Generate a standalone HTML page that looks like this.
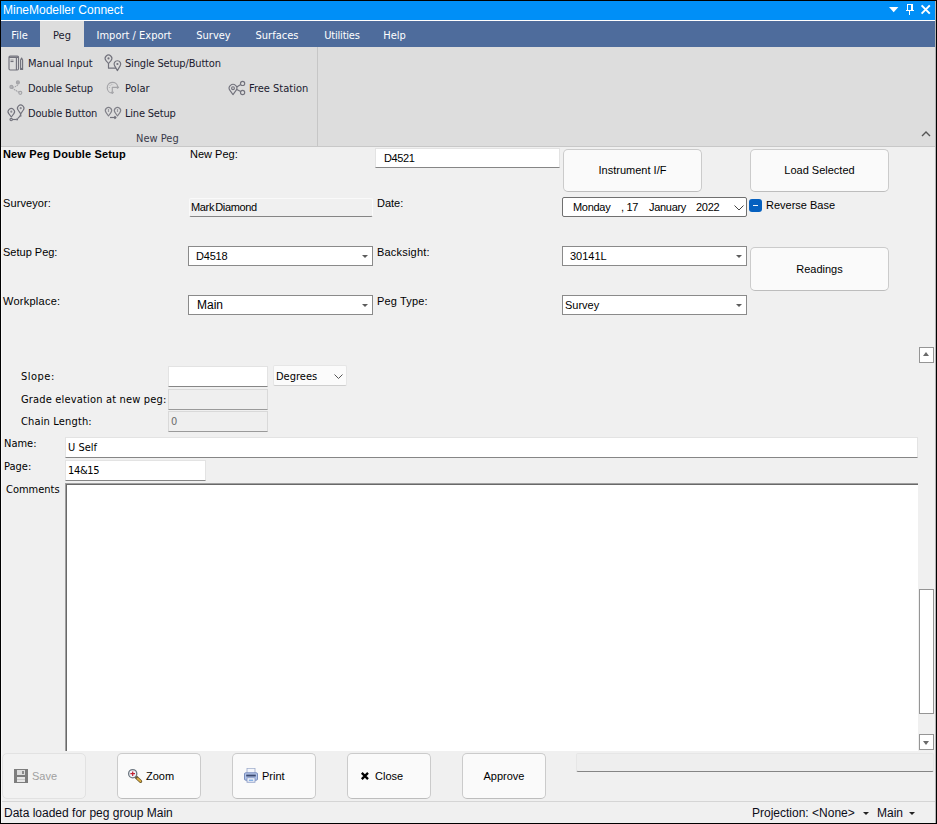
<!DOCTYPE html>
<html><head><meta charset="utf-8"><title>MineModeller Connect</title>
<style>
html,body{margin:0;padding:0;}
body{width:937px;height:824px;position:relative;overflow:hidden;background:#f0f0f0;font-family:"Liberation Sans",sans-serif;font-size:11px;color:#000;}
.a{position:absolute;box-sizing:border-box;white-space:nowrap;}
.th{font-family:"DejaVu Sans Condensed","DejaVu Sans",sans-serif;font-size:11px;}
.ms{font-family:"Liberation Sans",sans-serif;font-size:11px;}
.t{line-height:14px;height:14px;}
#frame{left:0;top:0;width:937px;height:824px;border:1px solid #000;z-index:50;pointer-events:none;}
#title{left:1px;top:1px;width:934px;height:19px;background:#008ff7;color:#fff;font-size:12px;}
#tabs{left:1px;top:21px;width:934px;height:26px;background:#4e6c9c;}
.tab{top:0;height:26px;line-height:30px;color:#fff;text-align:center;}
#ribbon{left:1px;top:47px;width:934px;height:99px;background:#dddddd;}
.ri{color:#1b1b2f;}
.inp{background:#fff;border:1px solid #e3e3e3;border-bottom:1px solid #868686;}
.dis{background:#efefef;border:1px solid #d9d9d9;border-bottom:1px solid #9a9a9a;}
.cb{background:#fff;border:1px solid #8a8a8a;}
.btn{background:#fafafa;border:1px solid #cbcbcb;border-bottom-color:#bdbdbd;border-radius:5px;text-align:center;}
.arr{width:0;height:0;border-left:3px solid transparent;border-right:3px solid transparent;border-top:3px solid #5c5c5c;}
</style></head><body>
<div class="a" id="title"><span class="a" style="left:2px;top:1px;line-height:16px">MineModeller Connect</span>
<svg class="a" style="left:884px;top:0" width="50" height="19" viewBox="885 1 50 19"><path d="M889 7H898.4L893.7 12.2Z" fill="#fff"/><g fill="#fff" shape-rendering="crispEdges"><rect x="907" y="4" width="1" height="7"/><rect x="907" y="4" width="6" height="1"/><rect x="911" y="4" width="2" height="7"/><rect x="906" y="10" width="8" height="1"/><rect x="909" y="11" width="1" height="4"/></g><path d="M921.6 5.4L929.8 13.6M929.8 5.4L921.6 13.6" stroke="#fff" stroke-width="2" fill="none"/></svg></div>
<div class="a" style="left:1px;top:20px;width:934px;height:1px;background:#fff"></div>
<div class="a" id="tabs">
 <div class="a tab th" style="left:0;width:37px">File</div>
 <div class="a tab th" style="left:39px;width:44px;background:#dddddd;color:#1b1b2f">Peg</div>
 <div class="a tab th" style="left:83px;width:100px">Import / Export</div>
 <div class="a tab th" style="left:183px;width:59px">Survey</div>
 <div class="a tab th" style="left:242px;width:68px">Surfaces</div>
 <div class="a tab th" style="left:311px;width:60px;letter-spacing:-0.2px">Utilities</div>
 <div class="a tab th" style="left:370px;width:47px">Help</div>
</div>
<div class="a" id="ribbon">
 <div class="a" style="left:316px;top:0;width:1px;height:99px;background:#c6c6c6"></div>
 <div class="a th ri t" style="left:27px;top:10px">Manual Input</div>
 <div class="a th ri t" style="left:27px;top:35px;letter-spacing:-0.18px">Double Setup</div>
 <div class="a th ri t" style="left:27px;top:60px;letter-spacing:-0.17px">Double Button</div>
 <div class="a th ri t" style="left:124px;top:10px;letter-spacing:-0.16px">Single Setup/Button</div>
 <div class="a th ri t" style="left:124px;top:35px">Polar</div>
 <div class="a th ri t" style="left:124px;top:60px;letter-spacing:-0.2px">Line Setup</div>
 <div class="a th ri t" style="left:248px;top:35px">Free Station</div>
 <div class="a th ri t" style="left:135px;top:85px;color:#3a3a4a">New Peg</div>
 <svg class="a" style="left:920px;top:84px" width="10" height="6" viewBox="0 0 10 6"><path d="M1 5 L5 1 L9 5" fill="none" stroke="#555" stroke-width="1.4"/></svg>
</div>
<div class="a" style="left:1px;top:146px;width:934px;height:1px;background:#c8c8c8"></div>

<div class="a ms t" style="left:3px;top:147px;font-weight:bold;letter-spacing:0.15px">New Peg Double Setup</div>
<div class="a ms t" style="left:190px;top:147px">New Peg:</div>
<div class="a inp ms" style="left:375px;top:148px;width:185px;height:20px;line-height:18px;padding-left:8px;letter-spacing:-0.4px">D4521</div>
<div class="a btn ms" style="left:563px;top:149px;width:139px;height:43px;line-height:41px">Instrument I/F</div>
<div class="a btn ms" style="left:750px;top:149px;width:139px;height:43px;line-height:41px">Load Selected</div>

<div class="a ms t" style="left:3px;top:196px;letter-spacing:0.1px">Surveyor:</div>
<div class="a ms" style="left:189px;top:198px;width:184px;height:19px;line-height:17px;padding-left:1px;letter-spacing:-0.35px;word-spacing:-1.5px;background:#f0f0f0;border:1px solid #fafafa;border-bottom:1px solid #858585;border-radius:2px">Mark Diamond</div>
<div class="a ms t" style="left:377px;top:196px">Date:</div>
<div class="a ms" style="left:562px;top:197px;width:185px;height:20px;line-height:18px;background:#fff;border:1px solid #707070;border-radius:2px;letter-spacing:-0.3px"><span class="a" style="left:10px;top:0">Monday</span><span class="a" style="left:58px;top:0">, 17</span><span class="a" style="left:86px;top:0">January</span><span class="a" style="left:133px;top:0">2022</span>
 <svg class="a" style="left:171px;top:7px" width="10" height="6" viewBox="0 0 10 6"><path d="M0.5 0.5 L5 5 L9.5 0.5" fill="none" stroke="#444" stroke-width="1"/></svg></div>
<div class="a" style="left:749px;top:199px;width:13px;height:13px;background:#0560bf;border-radius:3px"><div class="a" style="left:4px;top:6px;width:5px;height:1px;background:#f0f6fc"></div></div>
<div class="a ms t" style="left:766px;top:198px">Reverse Base</div>

<div class="a ms t" style="left:3px;top:245px">Setup Peg:</div>
<div class="a cb ms" style="left:188px;top:246px;width:185px;height:20px;line-height:18px;padding-left:7px;letter-spacing:-0.2px">D4518<div class="a arr" style="left:173px;top:8px"></div></div>
<div class="a ms t" style="left:377px;top:245px;letter-spacing:0.2px">Backsight:</div>
<div class="a cb ms" style="left:562px;top:246px;width:185px;height:20px;line-height:18px;padding-left:7px">30141L<div class="a arr" style="left:173px;top:8px"></div></div>
<div class="a btn ms" style="left:750px;top:247px;width:139px;height:44px;line-height:42px">Readings</div>

<div class="a ms t" style="left:3px;top:294px;letter-spacing:0.25px">Workplace:</div>
<div class="a cb ms" style="left:188px;top:295px;width:185px;height:20px;line-height:18px;padding-left:8px;font-size:12px">Main<div class="a arr" style="left:173px;top:8px"></div></div>
<div class="a ms t" style="left:377px;top:294px;letter-spacing:0.15px">Peg Type:</div>
<div class="a cb ms" style="left:562px;top:295px;width:185px;height:20px;line-height:18px;padding-left:2px">Survey<div class="a arr" style="left:173px;top:8px"></div></div>

<div class="a" style="left:919px;top:347px;width:15px;height:16px;background:#fff;border:1px solid #959595"><div class="a" style="left:3px;top:4px;width:0;height:0;border-left:3.5px solid transparent;border-right:3.5px solid transparent;border-bottom:4px solid #6a6a6a"></div></div>
<div class="a" style="left:919px;top:589px;width:15px;height:125px;background:#fff;border:1px solid #959595"></div>
<div class="a" style="left:919px;top:734px;width:15px;height:16px;background:#fff;border:1px solid #959595"><div class="a" style="left:3px;top:6px;width:0;height:0;border-left:3.5px solid transparent;border-right:3.5px solid transparent;border-top:4px solid #6a6a6a"></div></div>

<div class="a th t" style="left:21px;top:370px;letter-spacing:0.5px">Slope:</div>
<div class="a inp" style="left:168px;top:366px;width:100px;height:21px"></div>
<div class="a th" style="left:273px;top:365px;width:74px;height:21px;line-height:21px;padding-left:2px;background:#fbfbfb;border:1px solid #e6e6e6;border-bottom-color:#cfcfcf;border-radius:2px">Degrees
 <svg class="a" style="left:60px;top:8px" width="10" height="6" viewBox="0 0 10 6"><path d="M0.5 0.5 L4.5 4.5 L8.5 0.5" fill="none" stroke="#555" stroke-width="1"/></svg></div>
<div class="a th t" style="left:21px;top:393px;letter-spacing:0.17px">Grade elevation at new peg:</div>
<div class="a dis" style="left:168px;top:389px;width:100px;height:21px"></div>
<div class="a th t" style="left:21px;top:415px;letter-spacing:0.15px">Chain Length:</div>
<div class="a dis th" style="left:168px;top:411px;width:100px;height:21px;line-height:19px;padding-left:2px;color:#6d6d6d">0</div>

<div class="a th t" style="left:4px;top:437px">Name:</div>
<div class="a inp th" style="left:65px;top:437px;width:853px;height:21px;line-height:20px;padding-left:2px">U Self</div>
<div class="a th t" style="left:4px;top:460px">Page:</div>
<div class="a inp th" style="left:65px;top:460px;width:141px;height:21px;line-height:20px;padding-left:2px;letter-spacing:-0.35px">14&amp;15</div>
<div class="a th t" style="left:6px;top:483px">Comments</div>
<div class="a" style="left:65px;top:483px;width:853px;height:268px;background:#fff;border-left:1px solid #a0a0a0;border-top:1px solid #a0a0a0"><div class="a" style="left:0;top:0;width:852px;height:267px;border-left:1px solid #696969;border-top:1px solid #696969"></div></div>

<div class="a btn ms" style="left:2px;top:753px;width:84px;height:46px;background:#f2f2f2;border-color:#e2e2e2;color:#a0a0a0;line-height:44px;text-align:left;padding-left:29px">Save</div>
<div class="a btn ms" style="left:117px;top:753px;width:84px;height:46px;line-height:44px;text-align:left;padding-left:28px">Zoom</div>
<div class="a btn ms" style="left:232px;top:753px;width:84px;height:46px;line-height:44px;text-align:left;padding-left:29px">Print</div>
<div class="a btn ms" style="left:347px;top:753px;width:84px;height:46px;line-height:44px;text-align:left;padding-left:27px">Close</div>
<div class="a btn ms" style="left:462px;top:753px;width:84px;height:46px;line-height:44px">Approve</div>
<div class="a" style="left:576px;top:753px;width:358px;height:19px;background:#eeeeee;border:1px solid #e6e6e6;border-bottom:1px solid #858585;border-radius:2px"></div>

<div class="a" style="left:1px;top:801px;width:934px;height:1px;background:#d5d5d5"></div>
<div class="a" style="left:4px;top:806px;font-size:12px;line-height:14px;color:#0c0c18">Data loaded for peg group Main</div>
<div class="a" style="left:752px;top:806px;font-size:12px;line-height:14px;color:#0c0c18">Projection: &lt;None&gt;</div>
<div class="a arr" style="left:863px;top:812px;border-top-color:#222"></div>
<div class="a" style="left:877px;top:806px;font-size:12px;line-height:14px;color:#0c0c18">Main</div>
<div class="a arr" style="left:909px;top:812px;border-top-color:#222"></div>
<!--BICONS-->
<svg class="a" style="left:14px;top:769px" width="14" height="14" viewBox="0 0 14 14" shape-rendering="crispEdges"><rect x="0" y="0" width="14" height="14" rx="1" fill="#7d7d7d"/><rect x="3" y="1" width="8" height="5" fill="#dcdcdc"/><rect x="8" y="2" width="2" height="3" fill="#8a8a8a"/><rect x="3" y="8" width="8" height="5" fill="#e6e6e6"/><rect x="3" y="10" width="8" height="1" fill="#c8c8c8"/></svg>
<svg class="a" style="left:127px;top:768px" width="16" height="16" viewBox="127 768 16 16"><path d="M136 777 L140.6 781.4" stroke="#6a5a30" stroke-width="3.2" stroke-linecap="round"/><path d="M137.6 778.6 L140.4 781.2" stroke="#e0b040" stroke-width="1.8" stroke-linecap="round"/><circle cx="132.7" cy="773.7" r="4.1" fill="#eef3f8" stroke="#6e7780" stroke-width="1.3"/><path d="M130.4 773.7H135M132.7 771.4V776" stroke="#c02030" stroke-width="1.2"/></svg>
<svg class="a" style="left:244px;top:768px" width="15" height="15" viewBox="244 768 15 15"><rect x="247" y="768.3" width="8" height="7" fill="#f4f6fb" stroke="#9aa8c8" stroke-width="0.8"/><rect x="244.5" y="772.8" width="13" height="7.4" rx="1.2" fill="#b4c6ea" stroke="#6f84b8" stroke-width="0.9"/><rect x="246.2" y="774.6" width="9.6" height="1.9" fill="#3c4a70"/><rect x="247" y="777.8" width="8" height="4.4" fill="#f4f6fb" stroke="#7f92c0" stroke-width="0.8"/><rect x="248.8" y="779.6" width="4.4" height="1.2" fill="#6aa0e0"/></svg>
<svg class="a" style="left:360px;top:771px" width="10" height="10" viewBox="360 771 10 10"><path d="M361.8 772.9L368 779.1M368 772.9L361.8 779.1" stroke="#000" stroke-width="2.3"/></svg>
<!--/BICONS-->
<!--ICONS-->
<svg class="a" style="left:4px;top:52px" width="24" height="22" viewBox="4 52 24 22" fill="none" stroke="#72727c" stroke-width="1.15" stroke-linejoin="round"><rect x="9" y="56" width="9.5" height="14" rx="1.2"/><path d="M9 57.2H18.5" stroke-width="1.6"/><path d="M16.4 57V70"/><path d="M10.5 60H13.5" stroke="#a4a4a8"/><path d="M10.5 61.5H13.5"/><path d="M20.6 69.5V60L21.6 58L22.6 60V69.5Z"/><path d="M20.6 68.5H22.6"/></svg>
<svg class="a" style="left:4px;top:77px" width="24" height="22" viewBox="4 77 24 22" fill="none" stroke="#72727c" stroke-width="1.15" stroke-linejoin="round"><g stroke="#a4a4a8"><circle cx="17.9" cy="82.4" r="1.5" fill="#a9a9ad"/><circle cx="11.4" cy="86.9" r="1.5" fill="#b4b4b8"/><circle cx="20.3" cy="92.8" r="1.5"/><path d="M12.5 87.3 Q17.5 86.5 18 84" stroke-dasharray="1.5 0.7"/><path d="M12 88 L19 92.4" stroke-dasharray="1.5 0.7"/></g></svg>
<svg class="a" style="left:4px;top:102px" width="24" height="22" viewBox="4 102 24 22" fill="none" stroke="#72727c" stroke-width="1.15" stroke-linejoin="round"><path d="M11.30 117.00 L8.75 113.63 A3.2 3.2 0 1 1 13.85 113.63Z"/><circle cx="11.3" cy="111.7" r="1.1" fill="#8a8a92" stroke="none"/><path d="M20.70 113.80 L18.07 110.03 A3.2 3.2 0 1 1 23.33 110.03Z"/><circle cx="20.7" cy="108.2" r="1.1" fill="#8a8a92" stroke="none"/><circle cx="11.2" cy="119.5" r="1.2"/><path d="M12.4 119.5 H16.4"/><rect x="16.2" y="118.5" width="1.8" height="1.8" fill="#72727c" stroke="none"/><path d="M17.6 118.6 L20 116.2"/><rect x="19.6" y="114.8" width="1.8" height="1.8" fill="#72727c" stroke="none"/><path d="M20.6 113.8V115"/></svg>
<svg class="a" style="left:101px;top:52px" width="24" height="22" viewBox="101 52 24 22" fill="none" stroke="#72727c" stroke-width="1.15" stroke-linejoin="round"><path d="M108.50 63.50 L105.98 60.54 A3.3 3.3 0 1 1 111.02 60.54Z"/><circle cx="108.5" cy="58.4" r="1.1" fill="#72727c" stroke="none"/><path d="M117.40 70.60 L114.54 65.65 A3.3 3.3 0 1 1 120.26 65.65Z"/><circle cx="117.4" cy="64" r="1.1" fill="#72727c" stroke="none"/><path d="M108.5 63V68.2H116" stroke-width="1.2"/></svg>
<svg class="a" style="left:101px;top:77px" width="24" height="22" viewBox="101 77 24 22" fill="none" stroke="#72727c" stroke-width="1.15" stroke-linejoin="round"><g stroke="#a4a4a8"><path d="M117.8 87 A5.3 5.3 0 1 0 112.5 93"/><path d="M112.3 92.5V87.3H118"/><path d="M117 86.2L118.6 87.4L117 88.6" /><path d="M111.3 91.8L112.4 93.3L113.6 91.8"/><path d="M109.5 88 A3 3 0 0 1 113.5 84.6" stroke="#b6b6ba" stroke-dasharray="1 1"/></g></svg>
<svg class="a" style="left:101px;top:102px" width="24" height="22" viewBox="101 102 24 22" fill="none" stroke="#72727c" stroke-width="1.15" stroke-linejoin="round"><g stroke="#808088"><path d="M108.50 116.00 L105.96 112.38 A3.1 3.1 0 1 1 111.04 112.38Z"/><path d="M117.50 116.00 L114.96 112.38 A3.1 3.1 0 1 1 120.04 112.38Z"/><path d="M108.5 109V112M117.5 109V112" stroke="#9a9aa0"/></g><path d="M110 117.5H115.8" stroke-width="1.2"/><path d="M114.5 116.2L116 117.5L114.5 118.8" fill="#72727c"/></svg>
<svg class="a" style="left:225px;top:77px" width="24" height="22" viewBox="225 77 24 22" fill="none" stroke="#72727c" stroke-width="1.15" stroke-linejoin="round"><path d="M233.00 94.60 L229.94 90.46 A3.8 3.8 0 1 1 236.06 90.46Z"/><circle cx="233" cy="88.2" r="1.4"/><circle cx="242.6" cy="83.4" r="2.1"/><circle cx="242.6" cy="92.5" r="2.1"/><path d="M236.8 87 L240.7 84.6 M236.8 89.4 L240.7 91.6"/></svg>
<!--/ICONS-->
<div class="a" style="left:935px;top:1px;width:1px;height:822px;background:#b4b4b4"></div>
<div class="a" style="left:1px;top:147px;width:1px;height:676px;background:#f8f8f8"></div>
<div class="a" id="frame"></div>
</body></html>
